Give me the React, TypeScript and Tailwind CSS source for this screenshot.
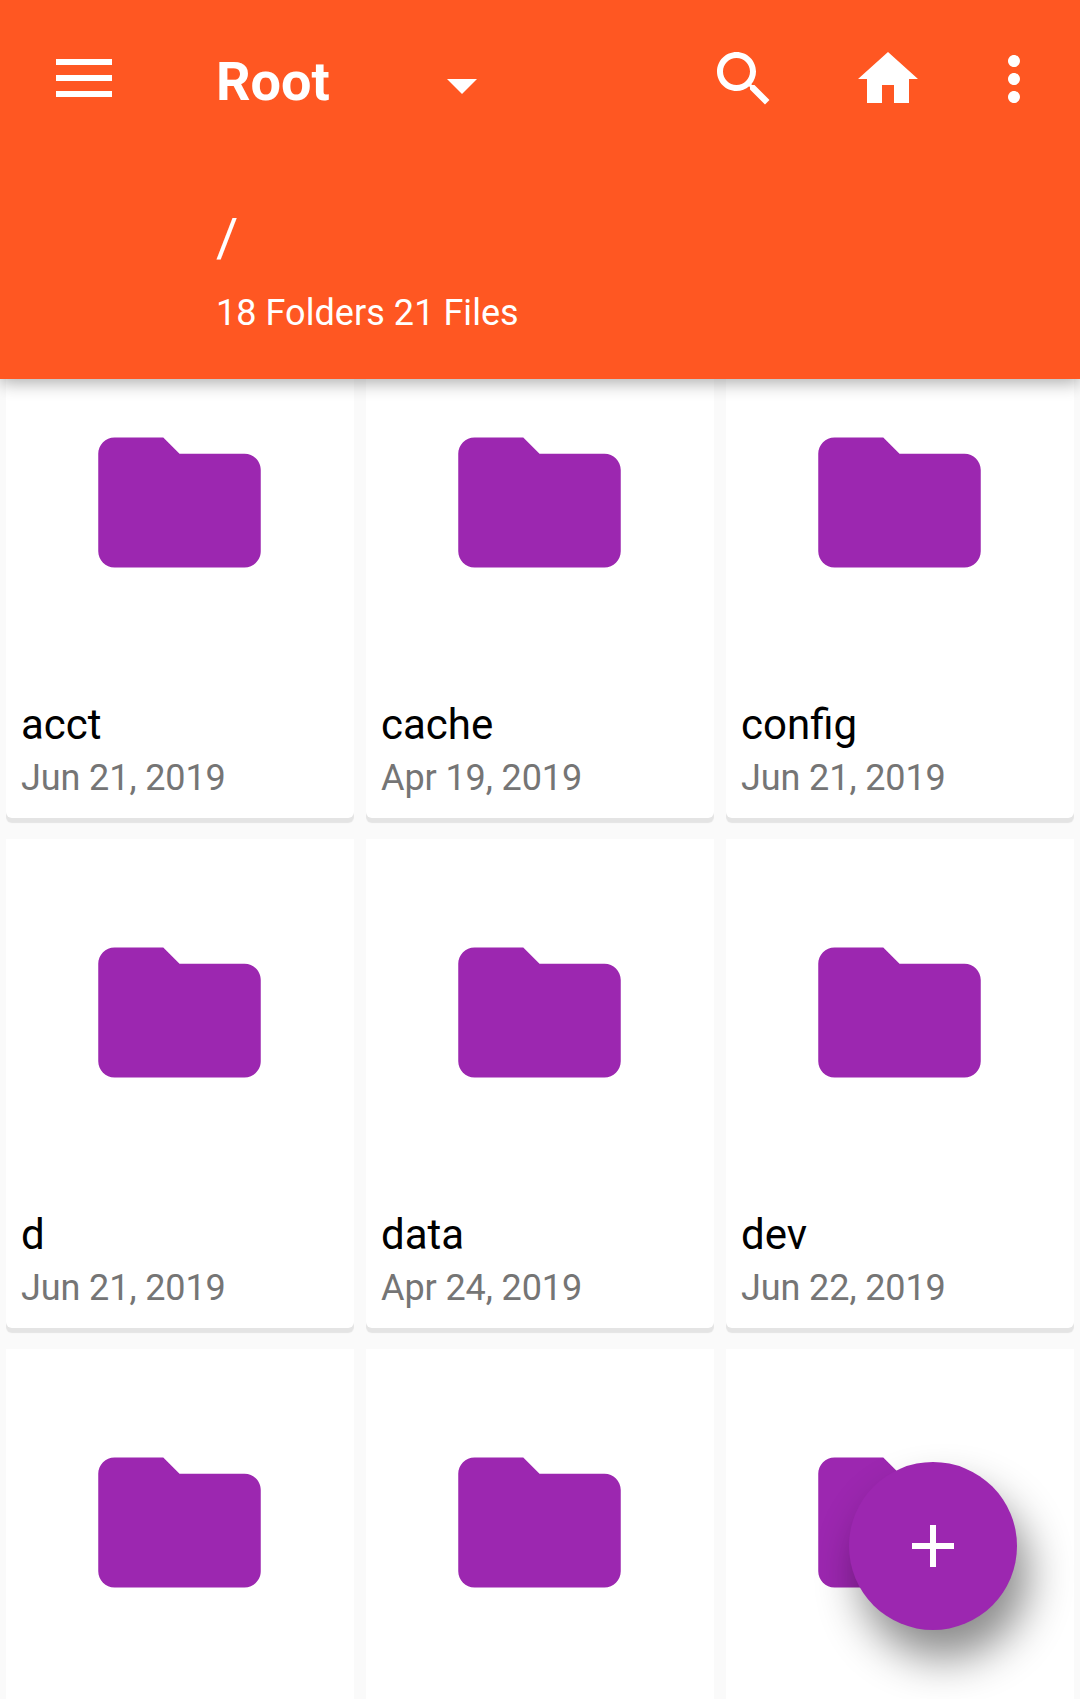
const folders = [
  { name: "acct", date: "Jun 21, 2019" },
  { name: "cache", date: "Apr 19, 2019" },
  { name: "config", date: "Jun 21, 2019" },
  { name: "d", date: "Jun 21, 2019" },
  { name: "data", date: "Apr 24, 2019" },
  { name: "dev", date: "Jun 22, 2019" },
  { name: "", date: "" },
  { name: "", date: "" },
  { name: "", date: "" },
];

function Icon({ d, className }: { d: string; className: string }) {
  return (
    <svg viewBox="0 0 24 24" fill="currentColor" className={className} aria-hidden="true">
      <path d={d} />
    </svg>
  );
}

function Header() {
  return (
    <header className="relative z-10 h-[379px] bg-[#ff5722] text-white shadow-[0_4px_16px_rgba(0,0,0,0.32)]">
      <div className="flex h-[156px] items-start">
        <button className="mt-[59px] ml-[56px] flex w-14 flex-col gap-[10px]" aria-label="Menu">
          <span className="h-1.5 w-full bg-white" />
          <span className="h-1.5 w-full bg-white" />
          <span className="h-1.5 w-full bg-white" />
        </button>
        <div className="mt-[52px] ml-[104px] flex w-[492px]">
          <h1 className="w-[210px] text-[54px] leading-[60px] font-bold">Root</h1>
          <Icon d="M7 10l5 5 5-5z" className="-mt-[3px] size-[72px]" />
        </div>
        <Icon
          d="M15.5 14h-.79l-.28-.27C15.41 12.59 16 11.11 16 9.5 16 5.91 13.09 3 9.5 3S3 5.91 3 9.5 5.91 16 9.5 16c1.61 0 3.09-.59 4.23-1.57l.27.28v.79l5 4.99L20.49 19l-4.99-5zm-6 0C7.01 14 5 11.99 5 9.5S7.01 5 9.5 5 14 7.01 14 9.5 11.99 14 9.5 14z"
          className="mt-[43px] size-[72px]"
        />
        <Icon d="M10 20v-6h4v6h5v-8h3L12 3 2 12h3v8z" className="mt-[43px] ml-[72px] size-[72px]" />
        <Icon
          d="M12 8c1.1 0 2-.9 2-2s-.9-2-2-2-2 .9-2 2 .9 2 2 2zm0 2c-1.1 0-2 .9-2 2s.9 2 2 2 2-.9 2-2-.9-2-2-2zm0 6c-1.1 0-2 .9-2 2s.9 2 2 2 2-.9 2-2-.9-2-2-2z"
          className="mt-[43px] ml-[54px] size-[72px]"
        />
      </div>
      <div className="pt-[52px] pl-[216px]">
        <p className="text-[54px] leading-[60px]">/</p>
        <p className="mt-[21px] text-[36px] leading-[48px] tracking-[0.05px]">18 Folders 21 Files</p>
      </div>
    </header>
  );
}

function FolderCard({ name, date }: { name: string; date: string }) {
  return (
    <article className="flex h-[489px] flex-col rounded-b-[6px] bg-white shadow-[0_5px_1px_0_#e4e4e4] [clip-path:inset(0_0_-12px_0)]">
      <div className="h-[372px] pt-[76px] pl-[76px]">
        <Icon
          d="M10 4H4c-1.1 0-2 .9-2 2v12c0 1.1.9 2 2 2h16c1.1 0 2-.9 2-2V8c0-1.1-.9-2-2-2h-8l-2-2z"
          className="size-[195px] text-[#9c27b0]"
        />
      </div>
      <h2 className="pl-[15px] text-[42px] leading-[48px] text-black">{name}</h2>
      <p className="mt-[5px] pl-[15px] text-[36px] leading-[48px] tracking-[-0.1px] text-[#757575]">{date}</p>
    </article>
  );
}

export default function App() {
  return (
    <div className="relative h-[1699px] w-[1080px] overflow-hidden bg-[#fafafa] font-['Roboto',sans-serif]">
      <Header />
      <main className="-mt-[50px] grid grid-cols-3 gap-x-3 gap-y-[21px] px-1.5">
        {folders.map((folder, i) => (
          <FolderCard key={i} {...folder} />
        ))}
      </main>
      <button
        aria-label="Add"
        className="absolute top-[1462px] left-[849px] z-20 flex size-[168px] items-center justify-center rounded-full bg-[#9c27b0] text-white shadow-[11px_28px_44px_rgba(0,0,0,0.46)]"
      >
        <Icon d="M19 13h-6v6h-2v-6H5v-2h6V5h2v6h6z" className="size-[72px]" />
      </button>
    </div>
  );
}
